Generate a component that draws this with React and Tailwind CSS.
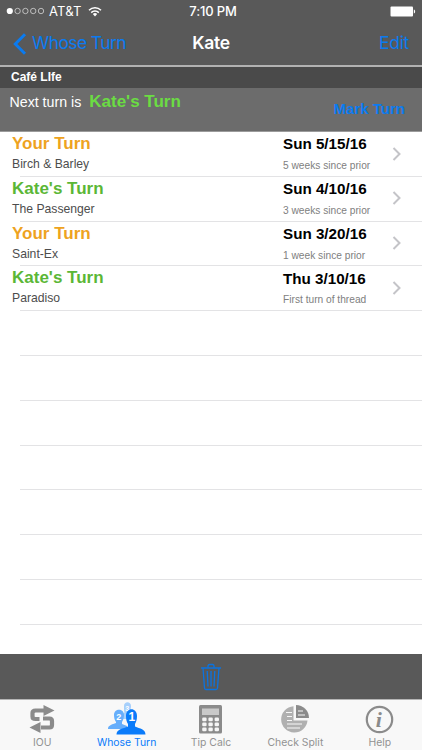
const turns = [
  { who: 'Your Turn', place: 'Birch & Barley', date: 'Sun 5/15/16', note: '5 weeks since prior', mine: true },
  { who: "Kate's Turn", place: 'The Passenger', date: 'Sun 4/10/16', note: '3 weeks since prior', mine: false },
  { who: 'Your Turn', place: 'Saint-Ex', date: 'Sun 3/20/16', note: '1 week since prior', mine: true },
  { who: "Kate's Turn", place: 'Paradiso', date: 'Thu 3/10/16', note: 'First turn of thread', mine: false },
]

const emptyRows = [1, 2, 3, 4, 5, 6, 7]

const StatusBar = () => (
  <div className="grid grid-cols-3 items-center h-[22px] pl-[6px] pr-[6px] text-white text-[13px] leading-[22px]">
    <div className="flex items-center">
      <svg width="40" height="8" viewBox="0 0 40 8">
        <circle cx="3.8" cy="4" r="3.1" fill="#fff" />
        {[11.6, 19.4, 27.2, 35].map((cx) => (
          <circle key={cx} cx={cx} cy="4" r="2.7" fill="none" stroke="#e4e4e4" strokeWidth="0.7" />
        ))}
      </svg>
      <span className="ml-[3px] tracking-[0.2px]">AT&amp;T</span>
      <svg className="ml-[6px]" width="14" height="11" viewBox="0 0 14 11" fill="none" stroke="#fff" strokeWidth="1.5">
        <path d="M1 4.2a8.6 8.6 0 0 1 12 0" />
        <path d="M3.2 6.6a5.4 5.4 0 0 1 7.6 0" />
        <path d="M7 10.4 4.8 8.1a3.2 3.2 0 0 1 4.4 0z" fill="#fff" stroke="none" />
      </svg>
    </div>
    <div className="pl-[4px] text-center font-medium tracking-[-0.15px]">7:10 PM</div>
    <div className="flex justify-end">
      <svg width="26" height="11" viewBox="0 0 26 11" fill="#fff">
        <rect x="0.5" y="0.5" width="22.5" height="10" rx="1" />
        <path d="M23.8 3.500c1.800.4 1.800 3.600 0 4z" />
      </svg>
    </div>
  </div>
)

const NavBar = () => (
  <div className="grid grid-cols-3 items-center h-[43px] pl-[13px] pr-[13px] text-[17.5px] text-[#0b7bf0]">
    <div className="flex items-center">
      <svg width="14" height="22" viewBox="0 0 14 22" fill="none" stroke="currentColor" strokeWidth="3">
        <path d="M12 1.2 2.3 11l9.7 9.8" />
      </svg>
      <span className="ml-[5px] whitespace-nowrap tracking-[-0.6px]">Whose Turn</span>
    </div>
    <div className="text-center font-semibold text-white tracking-[-0.3px]">Kate</div>
    <div className="text-right tracking-[-0.3px]">Edit</div>
  </div>
)

const TurnRow = ({ turn }) => (
  <div className="relative flex h-[44.8px] pl-[12px]">
    <div className="w-[271px]">
      <div className={`mt-[2px] text-[17px] leading-[20px] font-bold ${turn.mine ? 'text-[#eea31f]' : 'text-[#5bb736]'}`}>
        {turn.who}
      </div>
      <div className="mt-[3px] text-[12.2px] leading-[14px] text-[#4d4d4d]">{turn.place}</div>
    </div>
    <div className="w-[108px]">
      <div className="mt-[3.4px] text-[15.2px] leading-[18px] font-bold text-black">{turn.date}</div>
      <div className="mt-[6.600px] text-[10.2px] leading-[12px] text-[#808080]">{turn.note}</div>
    </div>
    <svg className="mt-[14.500px] ml-[1px]" width="10" height="14" viewBox="0 0 10 14" fill="none" stroke="#c4c4c8" strokeWidth="2">
      <path d="m1.500 1 6 6-6 6" />
    </svg>
    <div className="absolute left-[20px] right-0 bottom-0 h-px bg-[#e3e3e5]" />
  </div>
)

const SwapIcon = () => (
  <svg width="28" height="30" viewBox="0 0 28 30">
    <g fill="none" stroke="#8b8b8b" strokeWidth="4.2">
      <path d="M16 6.500H7.500Q4.500 6.500 4.500 9v3.500Q4.500 15 7.500 15H11.500" />
      <path d="M13 23.500h8.500Q24 23.500 24 21v-4Q24 14.500 21.500 14.500H15" />
    </g>
    <path fill="#8b8b8b" d="M15.500 1 26.500 6.500l-11 5.500zM12.500 18 1.500 23.500l11 5.500z" />
  </svg>
)

const PeopleIcon = () => (
  <svg width="40" height="34" viewBox="0 0 40 34" className="font-['Liberation_Sans',sans-serif] font-bold">
    <path fill="#a6cffb" d="M17 4c0-5 7-5 7 0 0 3-1 5-1.500 6.500L28 13v4H14v-4l3.500-2.500C17 9 17 7 17 4z" />
    <text x="18.200" y="9" fontSize="7" fill="#fff">3</text>
    <path fill="#66aefb" d="M7 13c0-7 10-7 10 0 0 3-.8 5-2 7v2l5 2v3H1c0-3 2-4 8-6v-1c-1.300-2-2-4-2-7z" />
    <text x="9.300" y="17.500" fontSize="9" fill="#fff">2</text>
    <path fill="#0a7bfa" d="M19 14c0-9 11-9 11 0 0 4-1 6-2 8v2.500c5 2.300 10.500 2.500 10.500 8H9.500c0-5.500 6.500-5.700 11.500-8V22c-1.200-2-2-4-2-8z" />
    <text x="21.400" y="18.500" fontSize="12" fill="#fff">1</text>
  </svg>
)

const CalculatorIcon = () => (
  <svg width="24" height="29" viewBox="0 0 24 29">
    <rect width="23" height="28.500" rx="1.500" fill="#8b8b8b" />
    <rect x="3" y="3.500" width="17" height="6.500" fill="#c9c9c9" />
    {[12.5, 17.5, 22.5].map((y) =>
      [3.2, 9.4, 15.6].map((x) => <rect key={`${x}-${y}`} x={x} y={y} width="4.400" height="3.800" rx="1.200" fill="#f5f5f5" />)
    )}
  </svg>
)

const SplitIcon = () => (
  <svg width="30" height="30" viewBox="0 0 30 30">
    <path fill="#b0b0b0" d="M13.500 2.200A13.200 13.200 0 1 0 27.500 16.500h-14z" />
    <path fill="#8b8b8b" d="M16 1a13 13 0 0 1 13 13H16z" />
    <g stroke="#f7f7f7" strokeWidth="1.200" fill="none">
      <path d="M6 8.500h6M7 12.500h5M7 16.500h5M7 20h15M7 24h13M18 7h5M18 11h7" />
    </g>
  </svg>
)

const InfoIcon = () => (
  <svg width="29" height="29" viewBox="0 0 29 29">
    <circle cx="14.500" cy="14.500" r="12.700" fill="none" stroke="#8b8b8b" strokeWidth="2.200" />
    <text x="10.800" y="21.700" fontSize="22" className="font-['Liberation_Serif',serif] font-bold italic" fill="#8b8b8b">i</text>
  </svg>
)

const tabs = [
  { label: 'IOU', icon: SwapIcon },
  { label: 'Whose Turn', icon: PeopleIcon, active: true },
  { label: 'Tip Calc', icon: CalculatorIcon },
  { label: 'Check Split', icon: SplitIcon },
  { label: 'Help', icon: InfoIcon },
]

const TabBar = () => (
  <nav className="grid grid-cols-5 h-[51px] border-t border-[#b5b5b5] bg-[#f8f8f8]">
    {tabs.map(({ label, icon: Icon, active }) => (
      <div key={label} className="flex flex-col items-center">
        <div className="flex h-[36px] items-center justify-center pt-[2px]">
          <Icon />
        </div>
        <span className={`text-[10.4px] leading-[14px] whitespace-nowrap ${active ? 'text-[#0a7bfa]' : 'text-[#929292]'}`}>
          {label}
        </span>
      </div>
    ))}
  </nav>
)

export default function App() {
  return (
    <div className="flex flex-col w-[422px] h-[750px] overflow-hidden bg-white font-['Inter',sans-serif]">
      <header className="h-[67px] shrink-0 border-b-2 border-[#b2b2b2] bg-[#595959]">
        <StatusBar />
        <NavBar />
      </header>

      <main className="flex-1 min-h-0 overflow-hidden font-['Liberation_Sans',sans-serif]">
        <h2 className="h-[21px] pl-[11px] bg-[#4a4a4a] text-white text-[12px] leading-[21px] font-bold">Café LIfe</h2>
        <div className="flex justify-between h-[44px] pl-[9.500px] pr-[17px] bg-[#6c6c6c] border-b border-[#9b9b9b]">
          <div className="flex items-baseline h-[28px] text-[14.2px] leading-[28px] text-white">
            <span>Next turn is</span>
            <span className="ml-[8px] text-[17px] font-bold text-[#6bdc43]">Kate's Turn</span>
          </div>
          <button className="text-[15px] leading-[42px] h-[42px] font-bold text-[#0b7bf0]">Mark Turn</button>
        </div>
        {turns.map((turn) => (
          <TurnRow key={turn.date} turn={turn} />
        ))}
        {emptyRows.map((row) => (
          <div key={row} className="ml-[20px] h-[44.8px] border-b border-[#e3e3e5]" />
        ))}
      </main>

      <div className="flex h-[45px] shrink-0 items-center justify-center bg-[#595959]">
        <svg width="22" height="28" viewBox="0 0 22 28" fill="none" stroke="#0b73e0" strokeWidth="1.300">
          <path d="M1 5h20M8 5V3q0-1.500 1.500-1.500h3Q14 1.500 14 3v2M3 5l1.500 20q.1 1.500 1.500 1.500h10q1.400 0 1.500-1.500L19 5M7.200 8l.8 15.500M11 8v15.500M14.800 8 14 23.500" />
        </svg>
      </div>
      <TabBar />
    </div>
  )
}
